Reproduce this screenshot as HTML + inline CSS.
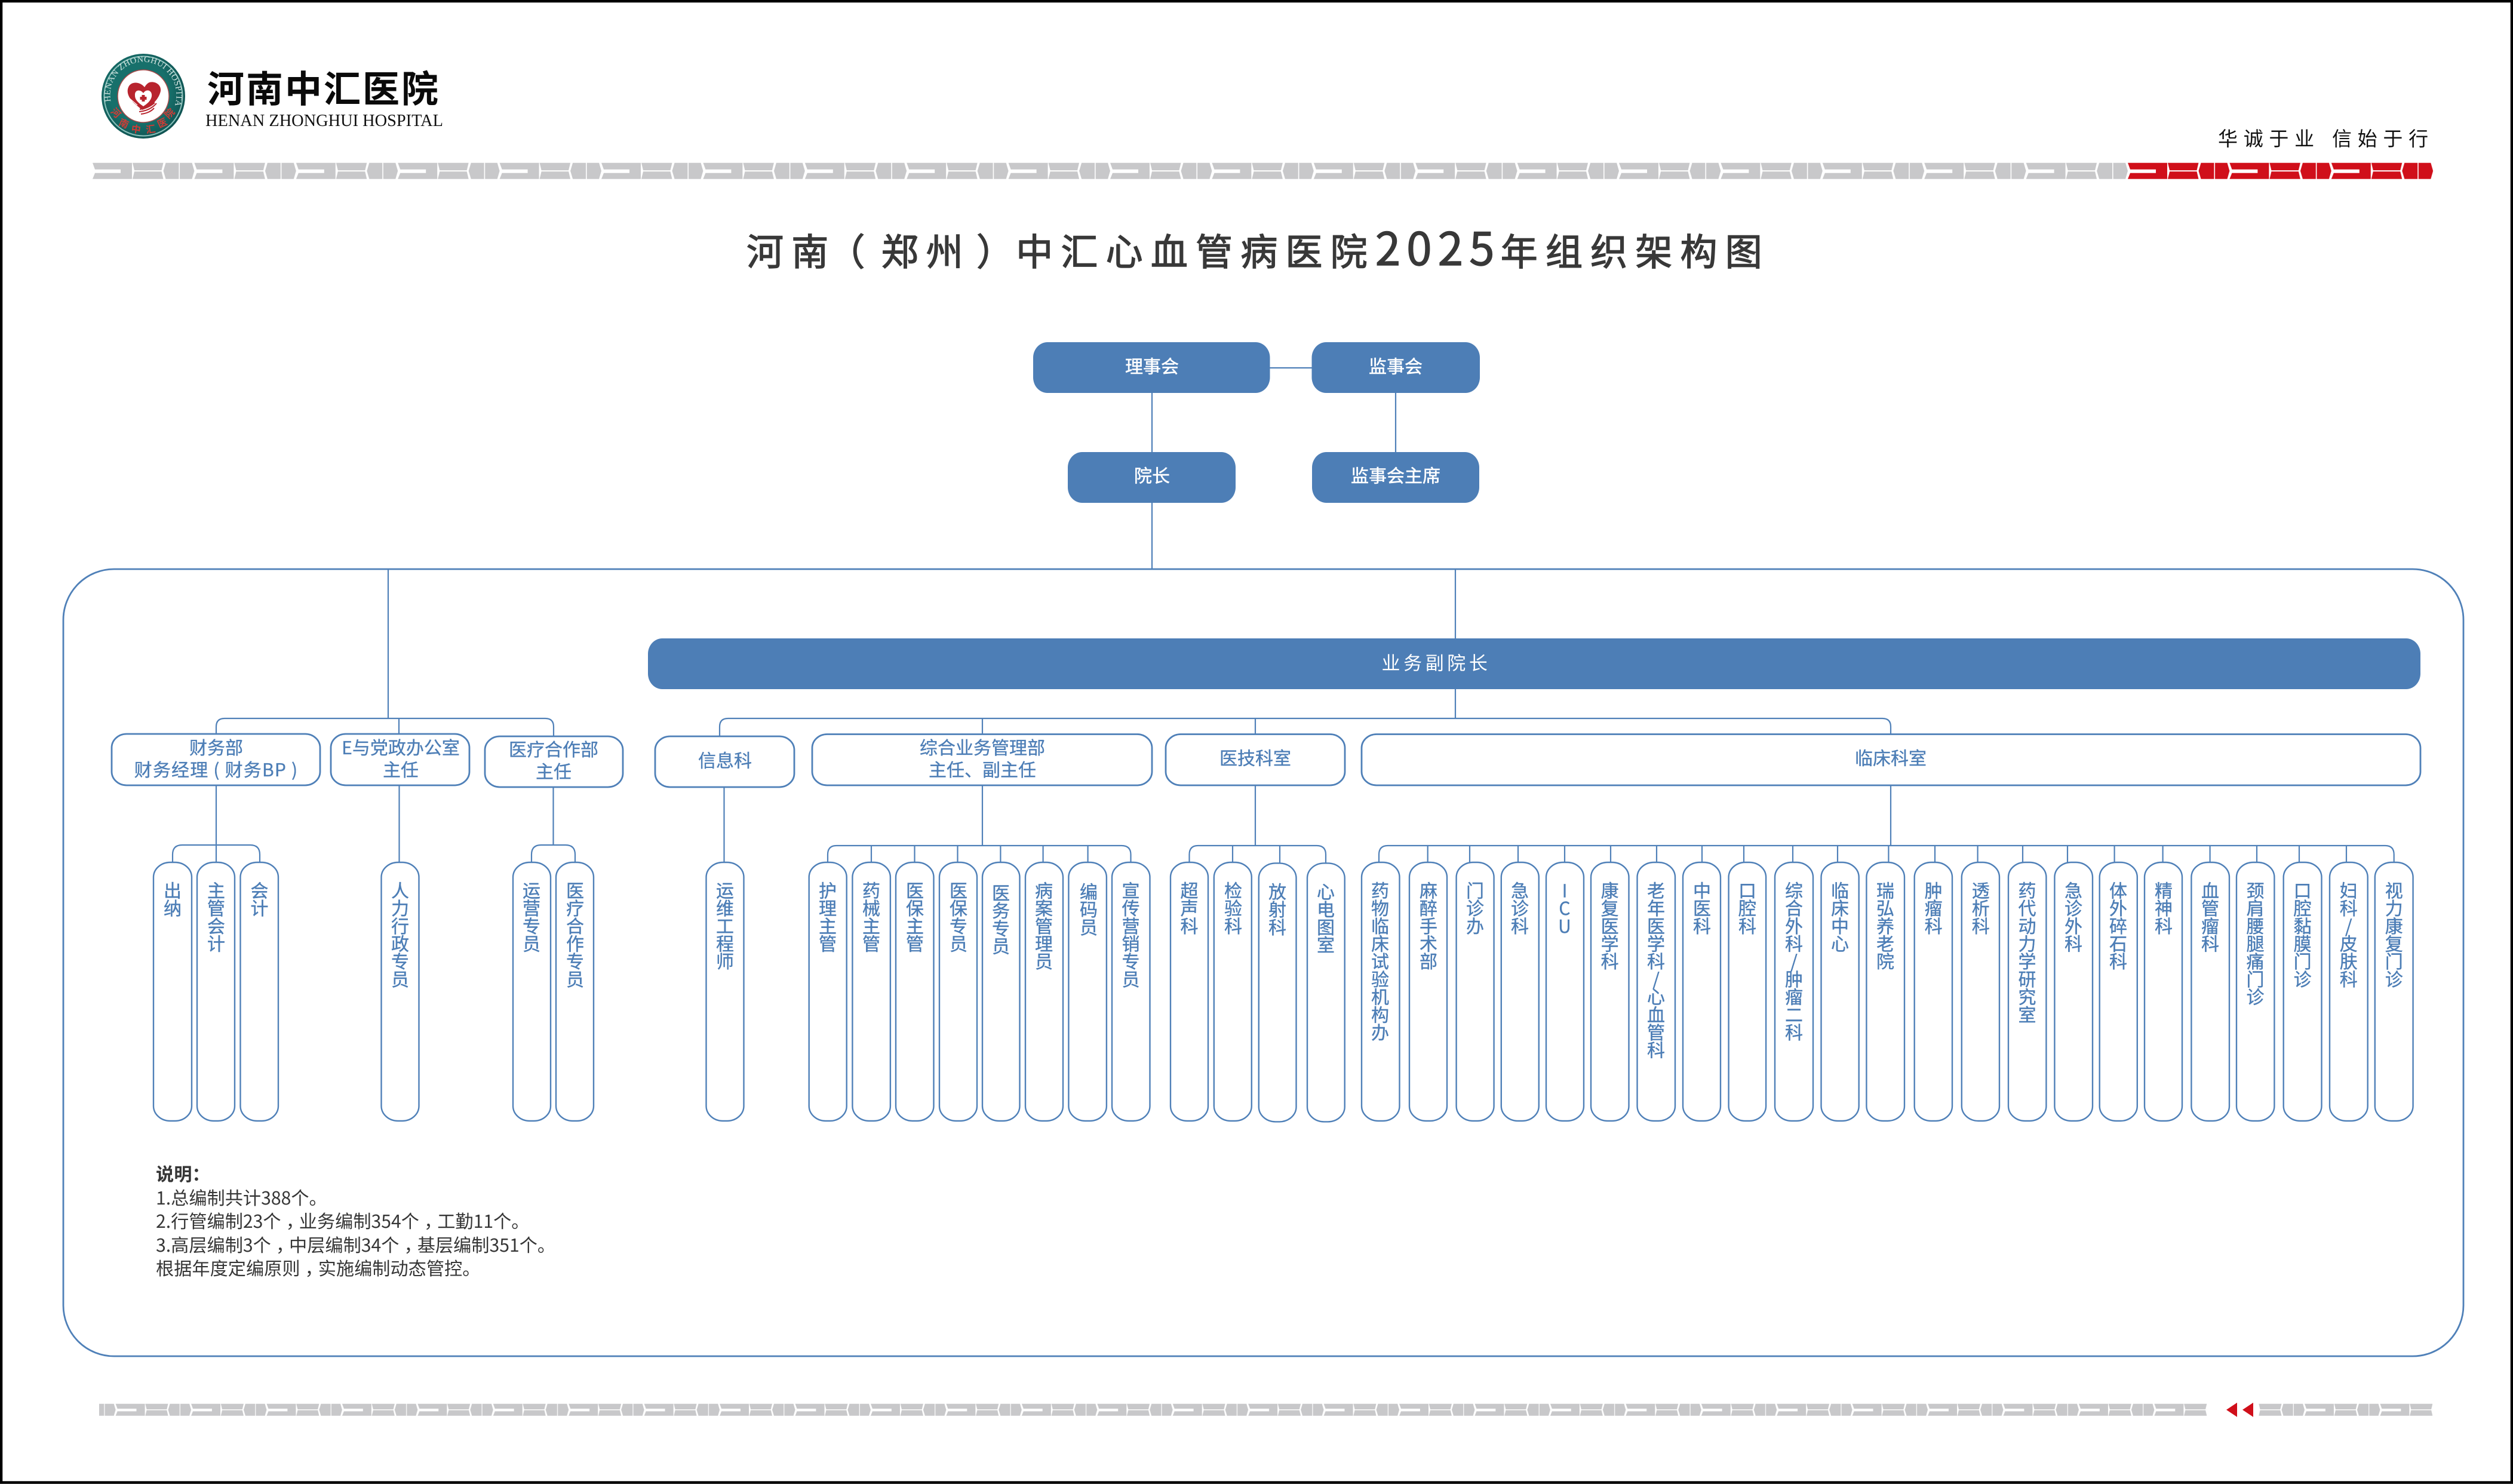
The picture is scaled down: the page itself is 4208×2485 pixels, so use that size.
<!DOCTYPE html>
<html lang="zh-CN">
<head>
<meta charset="utf-8">
<title>河南（郑州）中汇心血管病医院2025年组织架构图</title>
<style>
html,body{margin:0;padding:0;background:#fff}
#p{position:relative;width:4208px;height:2485px;overflow:hidden;background:#fff;font-family:"Noto Sans CJK SC","Liberation Sans",sans-serif;color:#4d7eb6}
svg.bg{position:absolute;left:0;top:0}
.t{position:absolute;transform:translate(-50%,-50%);white-space:nowrap;text-align:center;font-size:30px;line-height:37px;-webkit-text-stroke:.35px #4d7eb6}
.w{color:#fff;-webkit-text-stroke:.5px #fff}
.v{position:absolute;top:1476px;writing-mode:vertical-rl;text-orientation:upright;font-size:30px;line-height:30px;width:30px;transform:translateX(-50%);white-space:nowrap;letter-spacing:-.3px;color:#4d7eb6;-webkit-text-stroke:.4px #4d7eb6}
.title{position:absolute;left:1250px;top:366px;font-size:62px;line-height:90px;letter-spacing:13.2px;color:#383838;white-space:nowrap;-webkit-text-stroke:1.4px #383838}
.title i{font-style:normal;position:relative}
.title span{font-size:76px;letter-spacing:10.3px}
.slog{position:absolute;top:206px;font-size:33px;line-height:48px;letter-spacing:9.7px;color:#111;white-space:nowrap}
.note{position:absolute;left:261px;top:1945px;font-size:30.2px;line-height:39.5px;color:#363636;white-space:nowrap}
.note b{font-weight:700}
.note i{font-style:normal;position:relative;left:8px}
</style>
</head>
<body>
<div id="p">
<svg class="bg" width="4208" height="2485" viewBox="0 0 4208 2485" xmlns="http://www.w3.org/2000/svg">
<defs>
<g id="tile">
<polygon points="0,0 66,0 66,27 0,27 4,17 47,17 47,11 4,11"/>
<polygon points="67,0 118.5,0 115.5,12.5 70,12.5"/>
<polygon points="70,14.5 115.5,14.5 118.5,27 67,27"/>
<polygon points="122.5,0 144.4,0 144.4,27 122.5,27 118.5,13.5"/>
<polygon points="146,0 166.5,0 170.4,13.5 166.5,27 146,27"/>
</g>
<pattern id="g1" patternUnits="userSpaceOnUse" x="155" y="272.7" width="170.4" height="27"><use href="#tile" fill="#c8c8ca"/></pattern>
<pattern id="r1" patternUnits="userSpaceOnUse" x="3563" y="272.7" width="170.4" height="27"><use href="#tile" fill="#d00f1a"/></pattern>
<pattern id="g2" patternUnits="userSpaceOnUse" width="170.4" height="27" patternTransform="translate(3607.4 2350.7) scale(.742)"><use href="#tile" fill="#c8c8ca"/></pattern>
<pattern id="g3" patternUnits="userSpaceOnUse" width="170.4" height="27" patternTransform="translate(3859 2350.7) scale(.742)"><use href="#tile" fill="#c8c8ca"/></pattern>
<radialGradient id="lg" cx=".45" cy=".45" r=".6"><stop offset=".6" stop-color="#17706b"/><stop offset="1" stop-color="#0f4f4e"/></radialGradient>
<path id="arc" d="M186 172A55.5 55.5 0 1 1 294 172"/>
</defs>

<rect x="2" y="2" width="4204" height="2480.5" fill="#fff" stroke="#000" stroke-width="4.5"/>

<!-- Logo -->
<ellipse cx="240" cy="161" rx="70" ry="71" fill="url(#lg)"/>
<ellipse cx="240" cy="161" rx="65.5" ry="66.5" fill="none" stroke="#8cc2bc" stroke-width="2"/>
<text font-family="Liberation Serif,serif" font-size="14.5" fill="#d5e6e2"><textPath href="#arc" startOffset="1%" textLength="212" lengthAdjust="spacing">HENAN ZHONGHUI HOSPITAL</textPath></text>
<ellipse cx="240" cy="161" rx="43" ry="44" fill="#fff" stroke="#a84a4a" stroke-width="1.5"/>
<path d="M242 146C236 138 222 135 216 144C210 154 216 166 228 176L238 184C252 180 264 168 268 156C273 143 260 135 250 138C246 140 244 143 242 146Z" fill="#b8242e"/>
<path d="M240 156C235 149 225 150 226 160C226 168 233 173 240 178C248 173 255 166 254 158C253 150 244 149 240 156Z" fill="#fff"/>
<path d="M237.5 159h5v3h3v5h-3v3h-5v-3h-3v-5h3z" fill="#b8242e"/>
<path d="M216 164L230 176M219 169L232 180M223 173L235 183" stroke="#fff" stroke-width="1.2" fill="none"/>
<path d="M233 187C245 186 255 181 262 173M234 183C244 182 252 178 259 172M236 191C246 190 254 186 258 181" stroke="#b8242e" stroke-width="2" fill="none"/>
<g font-family="Noto Sans CJK SC,sans-serif" font-weight="700" font-size="16" fill="#cf3b35" text-anchor="middle">
<text transform="translate(190 193) rotate(45)">河</text>
<text transform="translate(205 212) rotate(25)">南</text>
<text transform="translate(227 222) rotate(8)">中</text>
<text transform="translate(253 222) rotate(-8)">汇</text>
<text transform="translate(274 211) rotate(-25)">医</text>
<text transform="translate(288 194) rotate(-45)">院</text>
</g>
<text x="347" y="171" font-family="Noto Sans CJK SC,sans-serif" font-weight="700" font-size="62" fill="#0a0a0a" textLength="387" lengthAdjust="spacing">河南中汇医院</text>
<text x="344" y="211" font-family="Liberation Serif,serif" font-size="29" fill="#111" textLength="398" lengthAdjust="spacingAndGlyphs">HENAN ZHONGHUI HOSPITAL</text>

<!-- Strips -->
<rect x="155" y="272.7" width="3408" height="27" fill="url(#g1)"/>
<rect x="3563" y="272.7" width="511.2" height="27" fill="url(#r1)"/>
<rect x="166" y="2350.7" width="3529.4" height="20" fill="url(#g2)"/>
<rect x="3782.3" y="2350.7" width="291" height="20" fill="url(#g3)"/>
<path d="M3746 2348.7L3728 2360.7L3746 2372.7ZM3773 2348.7L3755 2360.7L3773 2372.7Z" fill="#d00f1a"/>

<!-- Frame -->
<rect x="106" y="953" width="4019" height="1318" rx="85" ry="85" fill="none" stroke="#4f80b8" stroke-width="2.8"/>

<!-- Connectors -->
<path fill="none" stroke="#4f80b8" stroke-width="2.2" d="M1929 657V757M2337 657V757M2126 616H2197M1929 842V953M650 953V1203M2437 953V1069M2437 1154V1203
M362 1229V1217Q362 1203 376 1203H913Q927 1203 927 1217V1233M668 1203V1229
M362 1315V1444M289 1444V1431Q289 1415 305 1415H419Q435 1415 435 1431V1444
M668.5 1315V1444M926.5 1318V1415M890 1444V1431Q890 1415 906 1415H947Q963 1415 963 1431V1444
M1205 1233V1217Q1205 1203 1219 1203H3152Q3166 1203 3166 1217V1229M1645 1203V1229M2102 1203V1229
M1212.5 1318V1444
M1645 1315V1416M1386 1444V1431Q1386 1416 1401 1416H1878Q1893.5 1416 1893.5 1431V1444M1459 1416V1444M1531.5 1416V1444M1603.5 1416V1444M1675.4 1416V1444M1746.6 1416V1444M1821.6 1416V1444
M2102 1315V1416M1991.5 1444V1431Q1991.5 1416 2006 1416H2205Q2220 1416 2220 1431V1445M2064 1416V1444M2143 1416V1445
M3166 1315V1416M2309 1444V1431Q2309 1416 2324 1416H3994Q4008.7 1416 4008.7 1431V1444
M2390.7 1416V1444M2461 1416V1444M2542 1416V1444M2620 1416V1444M2697 1416V1444M2774 1416V1444M2850 1416V1444M2920 1416V1444M3002 1416V1444M3077 1416V1444M3162.4 1416V1444M3240 1416V1444M3311.6 1416V1444M3387 1416V1444M3462 1416V1444M3540.6 1416V1444M3621.6 1416V1444M3700.6 1416V1444M3779 1416V1444M3850 1416V1444M3929 1416V1444"/>

<!-- Filled boxes -->
<g fill="#4d7eb6">
<rect x="1730" y="573" width="396.5" height="85" rx="24" ry="26"/>
<rect x="2196.5" y="573" width="281.5" height="85" rx="24" ry="26"/>
<rect x="1788" y="757" width="281" height="85" rx="24" ry="26"/>
<rect x="2197" y="757" width="280" height="85" rx="24" ry="26"/>
<rect x="1085" y="1069" width="2968" height="85" rx="24" ry="26"/>
</g>

<!-- Outline boxes -->
<g fill="#fff" stroke="#4f80b8" stroke-width="2.8">
<rect x="187" y="1229" width="349" height="86" rx="25" ry="23"/>
<rect x="554" y="1229" width="232" height="86" rx="25" ry="23"/>
<rect x="812" y="1233" width="231" height="85" rx="25" ry="23"/>
<rect x="1097" y="1233" width="233" height="85" rx="25" ry="23"/>
<rect x="1360" y="1229.5" width="569" height="85.5" rx="25" ry="23"/>
<rect x="1952" y="1229.5" width="300" height="85.5" rx="25" ry="23"/>
<rect x="2280" y="1229.5" width="1773" height="85.5" rx="25" ry="23"/>
</g>

<!-- Pillars -->
<g fill="#fff" stroke="#4f80b8" stroke-width="2.4">
<rect x="257" y="1444" width="64" height="433" rx="28" ry="25"/>
<rect x="330" y="1444" width="63" height="433" rx="28" ry="25"/>
<rect x="402.5" y="1444" width="63.5" height="433" rx="28" ry="25"/>
<rect x="638.5" y="1444" width="63" height="433" rx="28" ry="25"/>
<rect x="859" y="1444" width="63" height="433" rx="28" ry="25"/>
<rect x="931" y="1444" width="63" height="433" rx="28" ry="25"/>
<rect x="1182.5" y="1444" width="63" height="433" rx="28" ry="25"/>
<rect x="1354.7" y="1444" width="63" height="433" rx="28" ry="25"/>
<rect x="1427.4" y="1444" width="63.5" height="433" rx="28" ry="25"/>
<rect x="1500" y="1444" width="63.5" height="433" rx="28" ry="25"/>
<rect x="1573" y="1444" width="63" height="433" rx="28" ry="25"/>
<rect x="1645" y="1444" width="62.5" height="433" rx="28" ry="25"/>
<rect x="1717" y="1444" width="63" height="433" rx="28" ry="25"/>
<rect x="1789.4" y="1444" width="63.5" height="433" rx="28" ry="25"/>
<rect x="1862" y="1444" width="63.5" height="433" rx="28" ry="25"/>
<rect x="1960" y="1444" width="63" height="433" rx="28" ry="25"/>
<rect x="2032.8" y="1444" width="63" height="433" rx="28" ry="25"/>
<rect x="2107.8" y="1445.4" width="62.7" height="433" rx="28" ry="25"/>
<rect x="2189" y="1445.4" width="62.7" height="433" rx="28" ry="25"/>
<rect x="2280" y="1444" width="63.5" height="433" rx="28" ry="25"/>
<rect x="2360" y="1444" width="63" height="433" rx="28" ry="25"/>
<rect x="2438.6" y="1444" width="63" height="433" rx="28" ry="25"/>
<rect x="2513.8" y="1444" width="63" height="433" rx="28" ry="25"/>
<rect x="2589" y="1444" width="63" height="433" rx="28" ry="25"/>
<rect x="2664" y="1444" width="63.5" height="433" rx="28" ry="25"/>
<rect x="2741.5" y="1444" width="63.5" height="433" rx="28" ry="25"/>
<rect x="2818" y="1444" width="63" height="433" rx="28" ry="25"/>
<rect x="2894.6" y="1444" width="62.5" height="433" rx="28" ry="25"/>
<rect x="2972" y="1444" width="64" height="433" rx="28" ry="25"/>
<rect x="3049.5" y="1444" width="63.2" height="433" rx="28" ry="25"/>
<rect x="3125.4" y="1444" width="63.6" height="433" rx="28" ry="25"/>
<rect x="3205.7" y="1444" width="63.3" height="433" rx="28" ry="25"/>
<rect x="3284.8" y="1444" width="63.2" height="433" rx="28" ry="25"/>
<rect x="3363" y="1444" width="63.4" height="433" rx="28" ry="25"/>
<rect x="3440.4" y="1444" width="63.6" height="433" rx="28" ry="25"/>
<rect x="3515.7" y="1444" width="63.1" height="433" rx="28" ry="25"/>
<rect x="3591" y="1444" width="63" height="433" rx="28" ry="25"/>
<rect x="3669.4" y="1444" width="63.6" height="433" rx="28" ry="25"/>
<rect x="3745" y="1444" width="63.4" height="433" rx="28" ry="25"/>
<rect x="3823.7" y="1444" width="63.8" height="433" rx="28" ry="25"/>
<rect x="3901" y="1444" width="63.7" height="433" rx="28" ry="25"/>
<rect x="3976.8" y="1444" width="63.8" height="433" rx="28" ry="25"/>
</g>
</svg>

<div class="slog" style="left:3714px">华诚于业</div>
<div class="slog" style="left:3905px">信始于行</div>
<div class="title">河南<i style="left:-14px">（</i>郑州<i style="left:9px">）</i>中汇心血管病医院<span>2025</span>年组织架构图</div>

<div class="t w" style="left:1929px;top:612px">理事会</div>
<div class="t w" style="left:2337px;top:612px">监事会</div>
<div class="t w" style="left:1929px;top:795px">院长</div>
<div class="t w" style="left:2337px;top:795px">监事会主席</div>
<div class="t" style="left:2405px;top:1108px;color:#fff;font-size:31px;letter-spacing:5.6px;-webkit-text-stroke:0">业务副院长</div>

<div class="t" style="left:362px;top:1269px">财务部<br><span style="letter-spacing:1.2px">财务经理&nbsp;(&nbsp;财务BP&nbsp;)</span></div>
<div class="t" style="left:671px;top:1269px">E与党政办公室<br>主任</div>
<div class="t" style="left:927px;top:1272px">医疗合作部<br>主任</div>
<div class="t" style="left:1214px;top:1272px">信息科</div>
<div class="t" style="left:1645px;top:1269px">综合业务管理部<br>主任、副主任</div>
<div class="t" style="left:2102px;top:1268px">医技科室</div>
<div class="t" style="left:3166px;top:1268px">临床科室</div>

<div class="v" style="left:289px">出纳</div>
<div class="v" style="left:362px">主管会计</div>
<div class="v" style="left:434.500px">会计</div>
<div class="v" style="left:670px">人力行政专员</div>
<div class="v" style="left:890px">运营专员</div>
<div class="v" style="left:963px">医疗合作专员</div>
<div class="v" style="left:1214px">运维工程师</div>
<div class="v" style="left:1386px">护理主管</div>
<div class="v" style="left:1459px">药械主管</div>
<div class="v" style="left:1532px">医保主管</div>
<div class="v" style="left:1605px">医保专员</div>
<div class="v" style="left:1676px;top:1480px">医务专员</div>
<div class="v" style="left:1748px">病案管理员</div>
<div class="v" style="left:1823px;top:1478px">编码员</div>
<div class="v" style="left:1893.500px">宣传营销专员</div>
<div class="v" style="left:1991.500px">超声科</div>
<div class="v" style="left:2065px">检验科</div>
<div class="v" style="left:2139px;top:1478px">放射科</div>
<div class="v" style="left:2220px;top:1478px">心电图室</div>
<div class="v" style="left:2311px">药物临床试验机构办</div>
<div class="v" style="left:2392px">麻醉手术部</div>
<div class="v" style="left:2470px">门诊办</div>
<div class="v" style="left:2545px">急诊科</div>
<div class="v" style="left:2620px">ICU</div>
<div class="v" style="left:2695.600px">康复医学科</div>
<div class="v" style="left:2773px">老年医学科/心血管科</div>
<div class="v" style="left:2850px">中医科</div>
<div class="v" style="left:2926px">口腔科</div>
<div class="v" style="left:3004px">综合外科/肿瘤二科</div>
<div class="v" style="left:3081px">临床中心</div>
<div class="v" style="left:3157px">瑞弘养老院</div>
<div class="v" style="left:3237.600px">肿瘤科</div>
<div class="v" style="left:3316.700px">透析科</div>
<div class="v" style="left:3394.500px">药代动力学研究室</div>
<div class="v" style="left:3472px">急诊外科</div>
<div class="v" style="left:3547px">体外碎石科</div>
<div class="v" style="left:3623px">精神科</div>
<div class="v" style="left:3701px">血管瘤科</div>
<div class="v" style="left:3776.500px">颈肩腰腿痛门诊</div>
<div class="v" style="left:3855.600px">口腔黏膜门诊</div>
<div class="v" style="left:3932.800px">妇科/皮肤科</div>
<div class="v" style="left:4008.700px">视力康复门诊</div>

<div class="note"><b>说明：</b><br>1.总编制共计388个。<br>2.行管编制23个<i>，</i>业务编制354个<i>，</i>工勤11个。<br>3.高层编制3个<i>，</i>中层编制34个<i>，</i>基层编制351个。<br>根据年度定编原则<i>，</i>实施编制动态管控。</div>
</div>
</body>
</html>
